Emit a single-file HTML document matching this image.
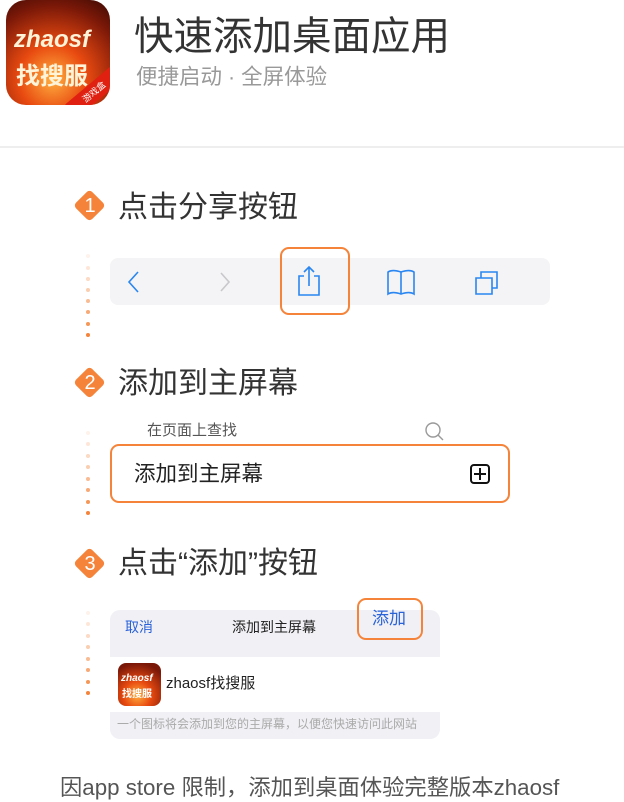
<!DOCTYPE html>
<html><head><meta charset="utf-8"><style>
*{margin:0;padding:0;box-sizing:border-box}
body{width:624px;height:802px;background:#fff;position:relative;overflow:hidden;font-family:"Liberation Sans","Noto Sans CJK SC",sans-serif;color:#333}
.a{position:absolute;white-space:nowrap}
.dia{position:absolute;width:23px;height:23px;background:#f5843a;transform:rotate(45deg);border-radius:4px}
.num{position:absolute;width:32px;text-align:center;color:#fff;font-size:20px;line-height:32px}
.dot{position:absolute;left:86px;width:4px;height:4px;border-radius:2px;background:#f5843a}
.ob{position:absolute;border:2px solid #f5843a;border-radius:9px}
.st{position:absolute;left:118px;font-size:30px;line-height:36px;color:#333;white-space:nowrap}
</style></head><body>
<div class="a" style="left:6px;top:0;width:104px;height:105px;border-radius:20px;background:radial-gradient(circle at 45% 75%,#ffb040 0,#e84a10 35%,#7a1808 75%,#3a0a04 100%);overflow:hidden">
<div class="a" style="left:8px;top:26px;color:#fff3d8;font-size:24px;font-weight:bold;font-style:italic">zhaosf</div>
<div class="a" style="left:10px;top:56px;color:#fff3d8;font-size:24px;font-weight:bold">找搜服</div>
<div class="a" style="right:-14px;bottom:4px;width:60px;height:18px;background:#e02010;transform:rotate(-40deg);color:#fff;font-size:9px;text-align:center;line-height:18px">游戏盒</div>
</div>
<div class="a" style="left:134px;top:12px;font-size:39.5px;color:#333;line-height:50px">快速添加桌面应用</div>
<div class="a" style="left:136px;top:63px;font-size:21.5px;color:#999;line-height:28px">便捷启动 · 全屏体验</div>
<div class="a" style="left:0;top:146px;width:624px;height:2px;background:#eee"></div>

<div class="dia" style="left:78px;top:194px"></div><div class="num" style="left:74px;top:190px">1</div>
<div class="st" style="top:190px">点击分享按钮</div>
<div class="a" style="left:110px;top:258px;width:440px;height:47px;background:#f4f4f6;border-radius:8px"></div>
<svg class="a" style="left:110px;top:258px" width="440" height="47" fill="none" stroke-width="1.6">
<path d="M28 14 L19 24 L28 34" stroke="#2a86f0"/>
<path d="M111 15 L119 24 L111 33" stroke="#c8c8cc"/>
<path d="M194 18 h-5 v19 h20 v-19 h-5 M199 28 v-19 M194 14 l5-5 5 5" stroke="#2a86f0"/>
<path d="M291 14 c-6-2-10-2-13 0 v22 c3-2 7-2 13 0 c6-2 10-2 13 0 v-22 c-3-2-7-2-13 0 z M291 14 v22" stroke="#2a86f0"/>
<path d="M366 20 h16 v16 h-16 z M371 20 v-6 h16 v16 h-5" stroke="#2a86f0"/>
</svg>
<div class="ob" style="left:280px;top:247px;width:70px;height:68px"></div>

<div class="dia" style="left:78px;top:371px"></div><div class="num" style="left:74px;top:367px">2</div>
<div class="st" style="top:366px">添加到主屏幕</div>
<div class="a" style="left:147px;top:421px;font-size:15px;color:#555;line-height:20px">在页面上查找</div>
<svg class="a" style="left:424px;top:421px" width="22" height="20" fill="none" stroke="#999" stroke-width="1.4"><circle cx="9" cy="9" r="7"/><path d="M14 14 l5 5"/></svg>
<div class="ob" style="left:110px;top:444px;width:400px;height:59px"></div>
<div class="a" style="left:134px;top:461px;font-size:21.5px;color:#222;line-height:26px">添加到主屏幕</div>
<div class="a" style="left:470px;top:464px;width:20px;height:20px;border:2px solid #111;border-radius:4px"></div>
<div class="a" style="left:474px;top:473px;width:12px;height:2px;background:#111"></div>
<div class="a" style="left:479px;top:468px;width:2px;height:12px;background:#111"></div>

<div class="dia" style="left:78px;top:552px"></div><div class="num" style="left:74px;top:548px">3</div>
<div class="st" style="top:546px">点击“添加”按钮</div>
<div class="a" style="left:110px;top:610px;width:330px;height:129px;background:#f0f0f5;border-radius:10px;overflow:hidden">
<div class="a" style="left:0;top:47px;width:330px;height:55px;background:#fff"></div>
</div>
<div class="a" style="left:125px;top:617px;font-size:14px;color:#2a62d8;line-height:20px">取消</div>
<div class="a" style="left:232px;top:617px;font-size:14px;color:#222;line-height:20px">添加到主屏幕</div>
<div class="ob" style="left:357px;top:598px;width:66px;height:42px"></div>
<div class="a" style="left:372px;top:608px;font-size:17px;color:#2a62d8;line-height:22px">添加</div>
<div class="a" style="left:118px;top:663px;width:43px;height:43px;border-radius:8px;background:radial-gradient(circle at 45% 75%,#ffb040 0,#e84a10 35%,#7a1808 80%)">
<div class="a" style="left:3px;top:10px;color:#fff;font-size:10px;font-weight:bold;font-style:italic">zhaosf</div>
<div class="a" style="left:4px;top:22px;color:#fff;font-size:10px;font-weight:bold">找搜服</div></div>
<div class="a" style="left:166px;top:674px;font-size:15px;color:#222;line-height:20px">zhaosf找搜服</div>
<div class="a" style="left:117px;top:716px;font-size:12px;color:#aaa;line-height:16px">一个图标将会添加到您的主屏幕，以便您快速访问此网站</div>

<div class="dot" style="top:254px;opacity:.1"></div><div class="dot" style="top:266px;opacity:.2"></div><div class="dot" style="top:277px;opacity:.3"></div><div class="dot" style="top:288px;opacity:.4"></div><div class="dot" style="top:299px;opacity:.55"></div><div class="dot" style="top:310px;opacity:.7"></div><div class="dot" style="top:322px;opacity:.85"></div><div class="dot" style="top:333px"></div>
<div class="dot" style="top:431px;opacity:.1"></div><div class="dot" style="top:442px;opacity:.2"></div><div class="dot" style="top:454px;opacity:.3"></div><div class="dot" style="top:465px;opacity:.4"></div><div class="dot" style="top:477px;opacity:.55"></div><div class="dot" style="top:488px;opacity:.7"></div><div class="dot" style="top:500px;opacity:.85"></div><div class="dot" style="top:511px"></div>
<div class="dot" style="top:611px;opacity:.1"></div><div class="dot" style="top:622px;opacity:.2"></div><div class="dot" style="top:634px;opacity:.3"></div><div class="dot" style="top:645px;opacity:.4"></div><div class="dot" style="top:657px;opacity:.55"></div><div class="dot" style="top:668px;opacity:.7"></div><div class="dot" style="top:680px;opacity:.85"></div><div class="dot" style="top:691px"></div>

<div class="a" style="left:60px;top:774px;font-size:22.3px;color:#555;line-height:28px">因app store 限制，添加到桌面体验完整版本zhaosf</div>
</body></html>
